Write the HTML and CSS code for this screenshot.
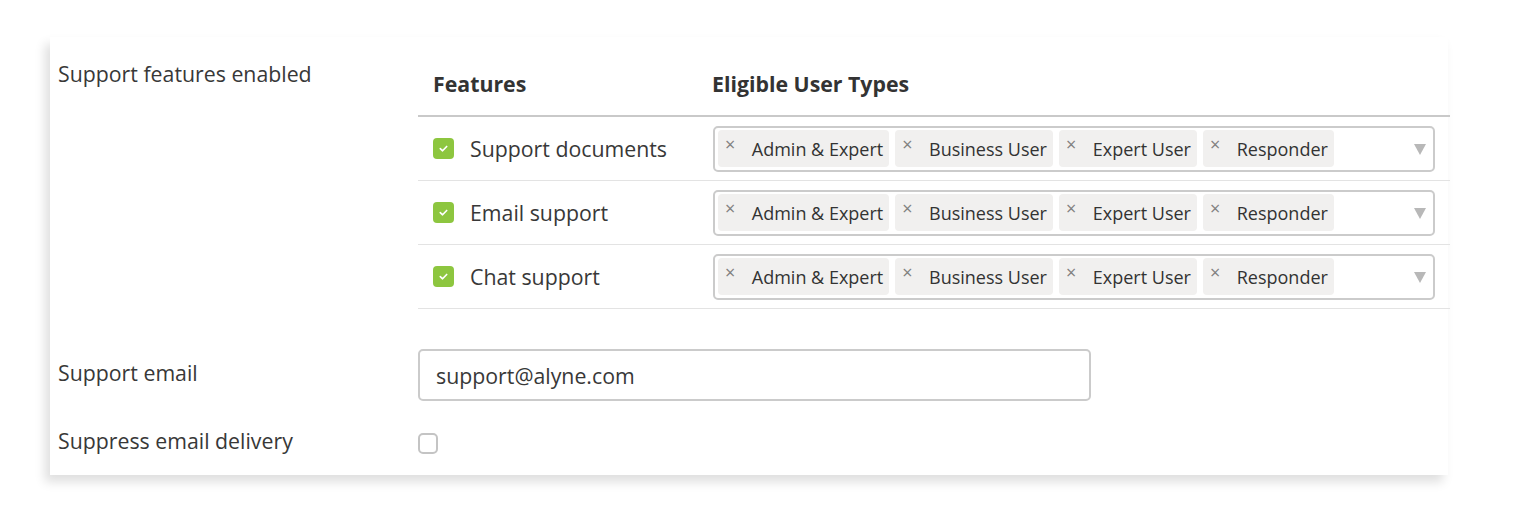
FILE: index.html
```html
<!DOCTYPE html>
<html>
<head>
<meta charset="utf-8">
<link rel="stylesheet" href="styles.css">
</head>
<body>
<div class="card">
  <div class="field-row features-row">
    <div class="label">Support features enabled</div>
    <div class="value">
      <div class="table">
        <div class="thead">
          <div class="col-feat th">Features</div>
          <div class="col-types th">Eligible User Types</div>
        </div>
        <div class="trow">
          <div class="col-feat"><span class="cb checked"><svg viewBox="0 0 12 12" width="11" height="11"><path d="M2.5 6.2 L5 8.5 L9.5 3.8" fill="none" stroke="#fff" stroke-width="1.8" stroke-linecap="round" stroke-linejoin="round"/></svg></span><span class="feat-text">Support documents</span></div>
          <div class="col-types">
            <div class="multi">
              <span class="tag"><span class="x">×</span>Admin &amp; Expert</span>
              <span class="tag"><span class="x">×</span>Business User</span>
              <span class="tag"><span class="x">×</span>Expert User</span>
              <span class="tag"><span class="x">×</span>Responder</span>
              <span class="arrow"></span>
            </div>
          </div>
        </div>
        <div class="trow">
          <div class="col-feat"><span class="cb checked"><svg viewBox="0 0 12 12" width="11" height="11"><path d="M2.5 6.2 L5 8.5 L9.5 3.8" fill="none" stroke="#fff" stroke-width="1.8" stroke-linecap="round" stroke-linejoin="round"/></svg></span><span class="feat-text">Email support</span></div>
          <div class="col-types">
            <div class="multi">
              <span class="tag"><span class="x">×</span>Admin &amp; Expert</span>
              <span class="tag"><span class="x">×</span>Business User</span>
              <span class="tag"><span class="x">×</span>Expert User</span>
              <span class="tag"><span class="x">×</span>Responder</span>
              <span class="arrow"></span>
            </div>
          </div>
        </div>
        <div class="trow">
          <div class="col-feat"><span class="cb checked"><svg viewBox="0 0 12 12" width="11" height="11"><path d="M2.5 6.2 L5 8.5 L9.5 3.8" fill="none" stroke="#fff" stroke-width="1.8" stroke-linecap="round" stroke-linejoin="round"/></svg></span><span class="feat-text">Chat support</span></div>
          <div class="col-types">
            <div class="multi">
              <span class="tag"><span class="x">×</span>Admin &amp; Expert</span>
              <span class="tag"><span class="x">×</span>Business User</span>
              <span class="tag"><span class="x">×</span>Expert User</span>
              <span class="tag"><span class="x">×</span>Responder</span>
              <span class="arrow"></span>
            </div>
          </div>
        </div>
      </div>
    </div>
  </div>
  <div class="field-row email-row">
    <div class="label">Support email</div>
    <div class="value"><div class="input">support@alyne.com</div></div>
  </div>
  <div class="field-row suppress-row">
    <div class="label">Suppress email delivery</div>
    <div class="value"><span class="cb empty"></span></div>
  </div>
</div>
</body>
</html>
```

FILE: styles.css
```css
* { box-sizing: border-box; }
html, body { margin: 0; padding: 0; background: #fff; }
body {
  font-family: "Open Sans", "Noto Sans", sans-serif;
  color: #383838;
  min-height: 516px;
}
.card {
  margin: 37px 0 0 50px;
  width: 1398px;
  height: 438px;
  background: #fff;
  padding: 23px 0 0 8px;
  box-shadow: -5px 7px 10px rgba(0,0,0,0.13);
}
.field-row {
  display: grid;
  grid-template-columns: 360px 1032px;
  align-items: start;
}
.label {
  font-size: 21.3px;
  line-height: 28px;
}
.table { width: 1032px; }
.thead {
  display: flex;
  padding: 10px 0 17px;
  border-bottom: 2px solid #c9c9c9;
}
.th {
  font-weight: 700;
  font-size: 21.3px;
  line-height: 28px;
  color: #333;
}
.col-feat {
  width: 294px;
  padding-left: 15px;
  display: flex;
  align-items: center;
}
.col-types {
  width: 738px;
}
.trow {
  display: flex;
  align-items: center;
  height: 64px;
  border-bottom: 1px solid #e3e3e3;
}
.cb {
  display: inline-flex;
  align-items: center;
  justify-content: center;
  width: 21px;
  height: 21px;
  border-radius: 4px;
  flex: none;
}
.cb.checked { background: #8dc63f; }
.cb.empty {
  width: 20px;
  height: 21px;
  border: 2px solid #c4c4c4;
  border-radius: 5px;
  margin-top: 6px;
}
.feat-text {
  margin-left: 16px;
  font-size: 21.3px;
  line-height: 28px;
}
.multi {
  position: relative;
  width: 722px;
  height: 46px;
  border: 2px solid #cbcbcb;
  border-radius: 5px;
  display: flex;
  align-items: center;
  gap: 6px;
  padding: 0 3px;
  margin-left: 1px;
}
.tag {
  display: inline-flex;
  align-items: center;
  height: 37px;
  background: #f1f0ef;
  border-radius: 4px;
  padding: 0 6px 0 6px;
  font-size: 18px;
  color: #333;
  white-space: nowrap;
}
.x {
  color: #808080;
  font-size: 18px;
  line-height: 1;
  align-self: flex-start;
  margin-top: 5px;
  margin-right: 16.5px;
  margin-left: 1px;
}
.arrow {
  position: absolute;
  right: 7px;
  top: 16px;
  width: 0;
  height: 0;
  border-left: 6.5px solid transparent;
  border-right: 6.5px solid transparent;
  border-top: 11px solid #b8b8b8;
}
.email-row { margin-top: 40px; }
.email-row .label { padding-top: 10px; }
.input {
  width: 673px;
  height: 52px;
  border: 2px solid #cbcbcb;
  border-radius: 5px;
  padding: 0 16px;
  display: flex;
  align-items: center;
  font-size: 21.3px;
  color: #383838;
}
.suppress-row { margin-top: 26px; }
```
